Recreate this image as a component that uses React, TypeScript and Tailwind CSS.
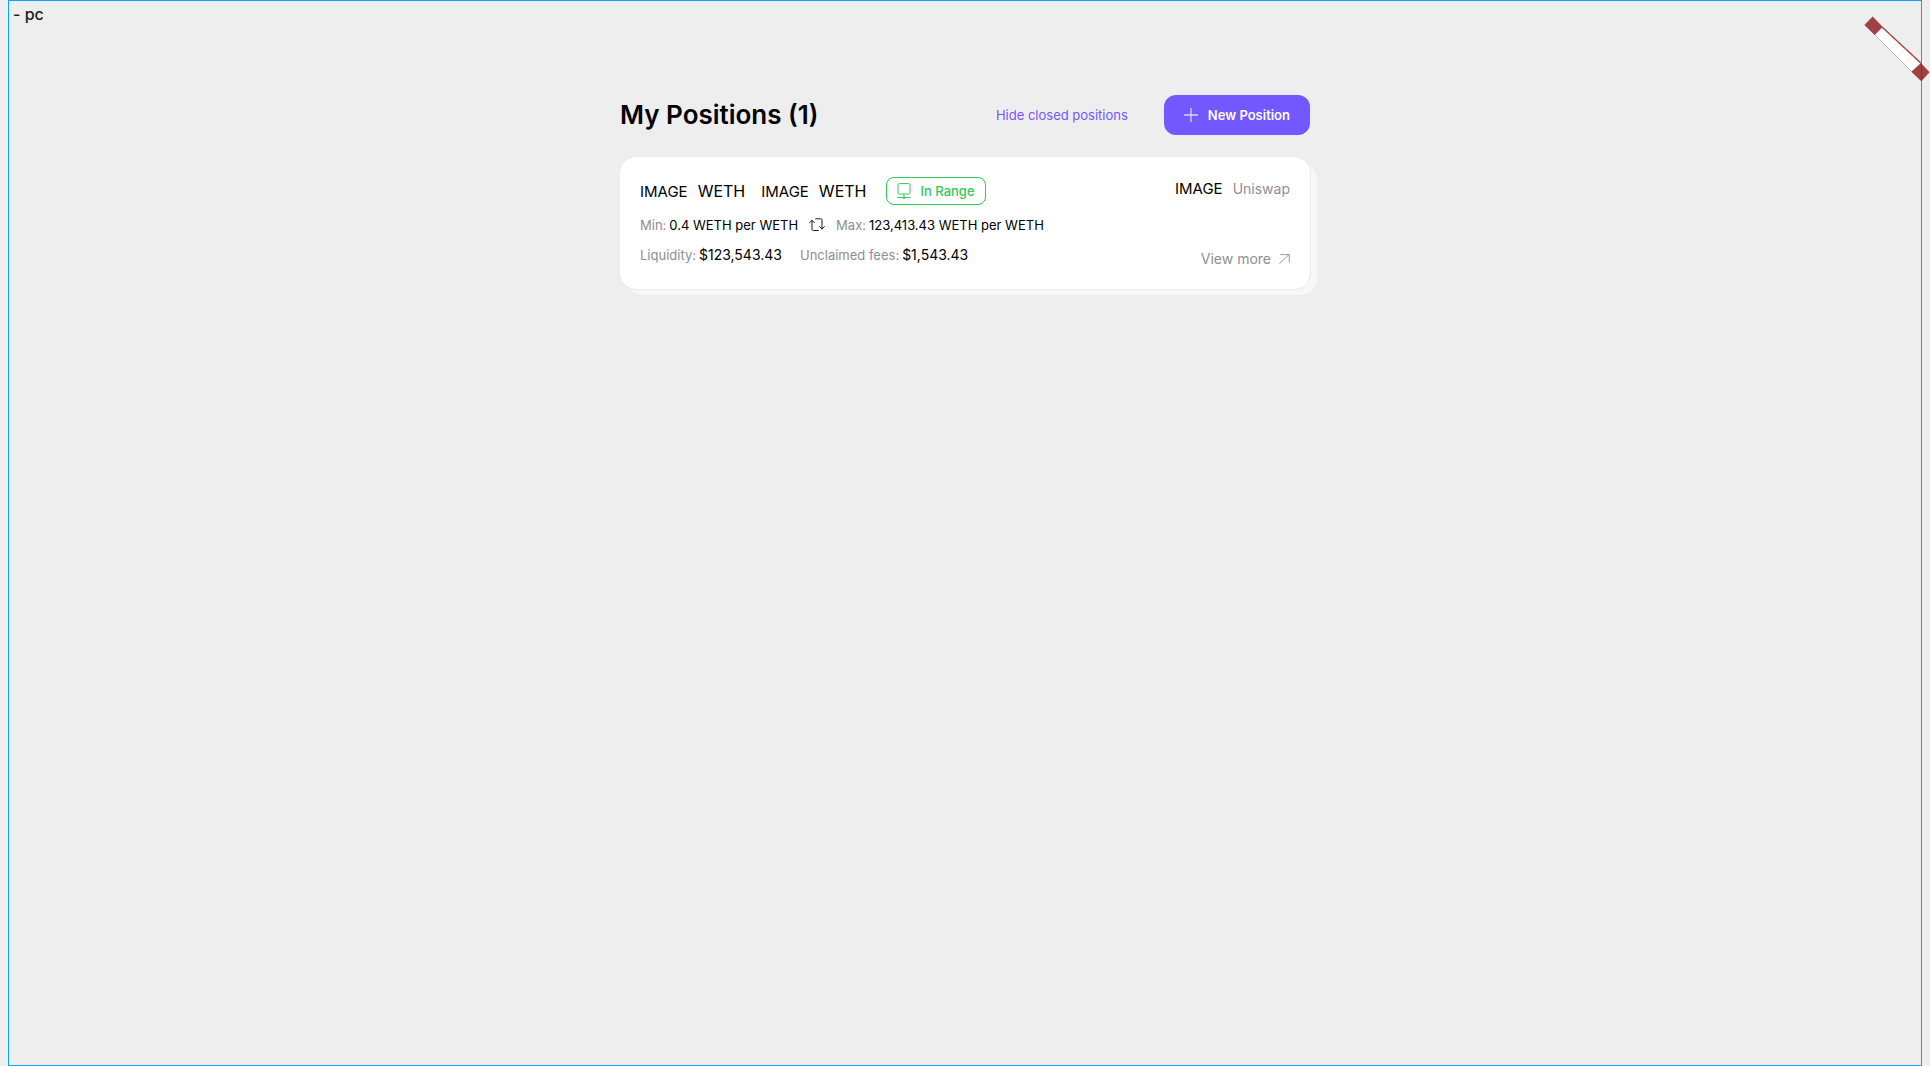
import type { ReactNode } from "react";

function PlusIcon() {
  return (
    <svg width="14" height="14" viewBox="0 0 14 14" fill="none" stroke="#fff" strokeOpacity="0.75" aria-hidden="true">
      <path d="M0.5 7h13M7 0.5v13" strokeWidth="1.3" strokeLinecap="round" />
    </svg>
  );
}

function RangeIcon() {
  return (
    <svg width="14" height="16" viewBox="0 0 14 16" fill="none" stroke="#34c759" aria-hidden="true">
      <rect x="1" y="0.6" width="12" height="10.4" rx="1.2" />
      <path d="M7 11v5M0.5 14.5h13" />
      <circle cx="7" cy="14.5" r="1" fill="#34c759" stroke="none" />
    </svg>
  );
}

function SwapIcon() {
  return (
    <svg width="16" height="14" viewBox="0 0 16 14" fill="none" stroke="#1c1c1e" strokeLinecap="round" strokeLinejoin="round" aria-hidden="true">
      <path d="M0.6 4.7 3 2.3 5.4 4.7M3 2.3v8.9q0 1.3 1.3 1.3h5" />
      <path d="M15.4 8.6 13 11 10.6 8.6M13 11V2.1q0-1.3-1.3-1.3H6.7" />
    </svg>
  );
}

function ArrowIcon() {
  return (
    <svg width="11" height="10" viewBox="0 0 11 10" fill="none" stroke="#8e8e93" strokeLinecap="round" strokeLinejoin="round" aria-hidden="true">
      <path d="M0.7 9.3 10 0.6M1.6 0.6H10.3V8.2" strokeWidth="0.9" />
    </svg>
  );
}

function Ribbon() {
  return (
    <svg className="absolute right-0 top-4" width="66" height="66" viewBox="0 0 66 66" aria-hidden="true">
      <path d="M18.3 11.3 57 47.3 47.7 55.7 11 19Z" fill="#fff" />
      <path d="M18.3 11.3 57 47.3" stroke="#a04040" strokeWidth="1.4" />
      <path d="M11 19 47.7 55.7" stroke="#c9b3b3" />
      <path
        d="M18.3 26.3 26 18.5M25.7 33.7 33.8 25.7M33 41 41.5 32.9M40.4 48.4 49.3 40.1"
        stroke="#f0dede"
        strokeWidth="0.7"
      />
      <path d="M8.7 0.4 18.8 11 10.6 19 0.4 9Z" fill="#a04040" />
      <path d="M57 47 65.5 56.3 57.3 65.2 47.3 55.7Z" fill="#a04040" />
      <path d="M57.5 48v16.5" stroke="#7a3440" />
    </svg>
  );
}

function Field({ label, children }: { label: string; children: ReactNode }) {
  return (
    <div className="flex gap-[3px]">
      <dt className="text-[#8e8e93]">{label}</dt>
      <dd className="text-black">{children}</dd>
    </div>
  );
}

function Money({ children }: { children: ReactNode }) {
  return <span className="text-sm leading-5">{children}</span>;
}

function Token() {
  return (
    <span className="flex items-baseline gap-[10px]">
      <span className="text-[15px]">IMAGE</span>
      <span className="text-base leading-7">WETH</span>
    </span>
  );
}

function PositionCard() {
  return (
    <article className="relative mt-[22px]">
      <div className="absolute left-[7px] top-[6px] h-full w-full rounded-2xl bg-[#f6f6fb]" />
      <div className="relative flex justify-between rounded-2xl bg-white px-5 py-5 outline outline-[#ebebef]">
        <div className="pb-1">
          <div className="flex items-center gap-5">
            <h2 className="flex gap-4">
              <Token />
              <Token />
            </h2>
            <span className="flex h-7 items-center gap-[9px] rounded-lg border border-[#34c759] px-[10px] text-[13px] leading-5 font-medium text-[#34c759]">
              <RangeIcon />
              In Range
            </span>
          </div>
          <dl className="mt-[10px] text-[13px] leading-5">
            <div className="flex items-center gap-[11px]">
              <Field label="Min:">0.4 WETH per WETH</Field>
              <button type="button" aria-label="Swap">
                <SwapIcon />
              </button>
              <Field label="Max:">123,413.43 WETH per WETH</Field>
            </div>
            <div className="mt-[10px] flex gap-[18px]">
              <Field label="Liquidity:">
                <Money>$123,543.43</Money>
              </Field>
              <Field label="Unclaimed fees:">
                <Money>$1,543.43</Money>
              </Field>
            </div>
          </dl>
        </div>
        <div className="flex flex-col items-end justify-between leading-6">
          <div className="flex gap-[10px]">
            <span className="text-[15px]">IMAGE</span>
            <span className="text-sm leading-6 text-[#8e8e93]">Uniswap</span>
          </div>
          <a href="#position" className="flex items-center gap-2 text-sm leading-5 text-[#8e8e93]">
            View more
            <ArrowIcon />
          </a>
        </div>
      </div>
    </article>
  );
}

export default function App() {
  return (
    <div className="relative flex min-h-screen flex-col bg-[#eeeeee] px-2 font-['Inter',sans-serif] text-black">
      <div className="relative flex-1 border border-[#0ba5f2]">
        <p className="absolute left-1 top-[3px] text-base leading-5 font-medium text-[#1c1c1e]">- pc</p>
        <main className="mx-auto w-full max-w-[690px] pt-[94px]">
          <header className="flex items-center justify-between">
            <h1 className="text-[26px] leading-10 font-semibold">My Positions (1)</h1>
            <div className="flex items-center gap-9">
              <button type="button" className="text-[13px] leading-5 text-[#7357ff]">
                Hide closed positions
              </button>
              <button
                type="button"
                className="flex h-10 items-center gap-[10px] rounded-xl bg-[#7357ff] px-5 text-[13px] leading-5 font-semibold text-white"
              >
                <PlusIcon />
                New Position
              </button>
            </div>
          </header>
          <PositionCard />
        </main>
      </div>
      <Ribbon />
    </div>
  );
}
